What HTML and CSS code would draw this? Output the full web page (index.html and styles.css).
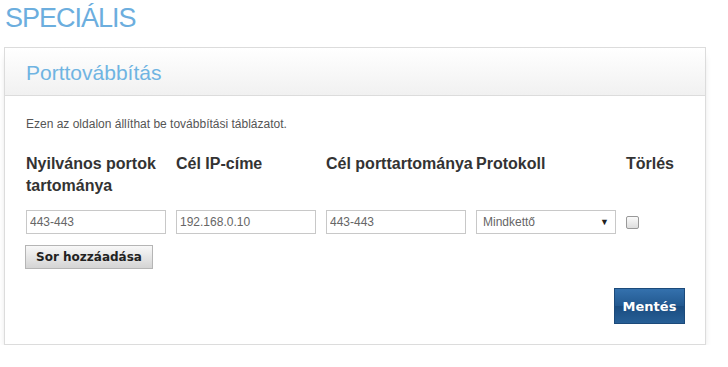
FILE: index.html
```html
<!DOCTYPE html>
<html lang="hu">
<head>
    <meta charset="UTF-8">
    <link rel="stylesheet" href="styles.css">
</head>
<body>
    <h1 class="page-title">SPECIÁLIS</h1>

    <div class="panel">
        <div class="panel-header">Porttovábbítás</div>

        <div class="panel-body">
            <p class="intro">Ezen az oldalon állíthat be továbbítási táblázatot.</p>

            <div class="fwd-table">
                <div class="col-head">Nyilvános portok tartománya</div>
                <div class="col-head">Cél IP-címe</div>
                <div class="col-head nowrap">Cél porttartománya</div>
                <div class="col-head">Protokoll</div>
                <div class="col-head">Törlés</div>

                <div class="cell"><input type="text" value="443-443"></div>
                <div class="cell"><input type="text" value="192.168.0.10"></div>
                <div class="cell"><input type="text" value="443-443"></div>
                <div class="cell">
                    <div class="select-box">
                        <span>Mindkettő</span>
                        <span class="arrow">&#9660;</span>
                    </div>
                </div>
                <div class="cell"><span class="check"></span></div>
            </div>

            <button class="btn-add" type="button">Sor hozzáadása</button>

            <div class="save-row">
                <button class="btn-save" type="button">Mentés</button>
            </div>
        </div>
    </div>
</body>
</html>
```

FILE: styles.css
```css
body {
    margin: 0;
    background-color: #fff;
    font-family: "Liberation Sans", Arial, sans-serif;
    color: #333;
}

.page-title {
    margin: 0;
    padding: 3px 0 0 5px;
    height: 44px;
    box-sizing: border-box;
    font-size: 27px;
    font-weight: normal;
    letter-spacing: -1px;
    color: #6caede;
    line-height: 30px;
}

.panel {
    margin-left: 4px;
    width: 702px;
    margin-top: 3px;
    border: 1px solid #dcdcdc;
    box-sizing: border-box;
    background-color: #fff;
    box-shadow: 0 6px 8px -4px rgba(0,0,0,0.28);
}

.panel-header {
    height: 48px;
    box-sizing: border-box;
    padding: 13px 0 0 21px;
    background: linear-gradient(to bottom, #ffffff, #f1f1f1);
    border-bottom: 1px solid #dcdcdc;
    color: #6fb4e2;
    font-size: 21px;
    line-height: 24px;
}

.panel-body {
    padding: 21px 20px 20px 21px;
}

.intro {
    margin: 0;
    font-size: 12px;
    line-height: 14px;
    color: #555;
}

.fwd-table {
    display: grid;
    grid-template-columns: repeat(4, 150px) 1fr;
    grid-template-rows: 57px 35px;
    margin-top: 22px;
}

.col-head {
    font-size: 16px;
    font-weight: bold;
    line-height: 22px;
    color: #333;
}

.nowrap {
    white-space: nowrap;
}

.cell input {
    width: 140px;
    height: 24px;
    box-sizing: border-box;
    border: 1px solid #c8c8c8;
    padding: 0 3px;
    font-family: "Liberation Sans", Arial, sans-serif;
    font-size: 12px;
    color: #666;
    outline: none;
}

.select-box {
    width: 140px;
    height: 24px;
    box-sizing: border-box;
    border: 1px solid #c8c8c8;
    display: flex;
    align-items: center;
    justify-content: space-between;
    padding: 0 6px 0 6px;
    font-size: 12px;
    color: #666;
}

.select-box .arrow {
    font-size: 9px;
    color: #222;
}

.check {
    display: block;
    width: 11px;
    height: 11px;
    margin-top: 6px;
    border: 1px solid #999;
    border-radius: 2px;
    background: linear-gradient(to bottom, #fafafa, #dedede);
}

.btn-add {
    display: block;
    margin-left: -1px;
    width: 128px;
    height: 24px;
    border: 1px solid #b5b5b5;
    background: linear-gradient(to bottom, #f8f8f8, #d4d4d4);
    font-family: "DejaVu Sans", Verdana, sans-serif;
    font-size: 12px;
    font-weight: bold;
    color: #222;
    padding: 0;
}

.save-row {
    display: flex;
    justify-content: flex-end;
    margin-top: 19px;
}

.btn-save {
    width: 71px;
    height: 36px;
    border: 1px solid #1c4a7a;
    background: linear-gradient(to bottom, #3471ad, #22588f 50%, #1a4c80 51%, #275f96);
    font-family: "DejaVu Sans", Verdana, sans-serif;
    font-size: 13px;
    font-weight: bold;
    color: #fff;
    padding: 0;
}
```
